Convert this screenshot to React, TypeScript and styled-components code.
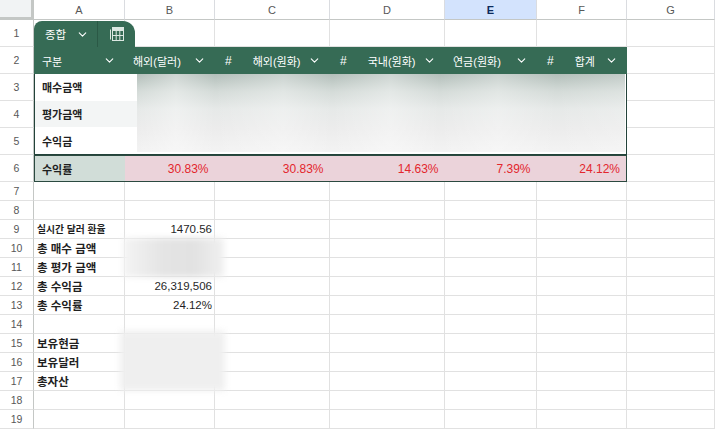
import React from 'react'
import styled, { createGlobalStyle } from 'styled-components'
import { ChevronDown } from 'lucide-react'

const GlobalStyle = createGlobalStyle`
  body {
    margin: 0;
    background: #ffffff;
    overflow: hidden;
  }
`

const COLS = ['A', 'B', 'C', 'D', 'E', 'F', 'G']
const ROW_COUNT = 19

type CellData = { text: string; bold?: boolean; right?: boolean; small?: boolean }

const lower: Record<string, CellData> = {
  '9-1': { text: '실시간 달러 환율', bold: true, small: true },
  '9-2': { text: '1470.56', right: true },
  '10-1': { text: '총 매수 금액', bold: true },
  '11-1': { text: '총 평가 금액', bold: true },
  '12-1': { text: '총 수익금', bold: true },
  '12-2': { text: '26,319,506', right: true },
  '13-1': { text: '총 수익률', bold: true },
  '13-2': { text: '24.12%', right: true },
  '15-1': { text: '보유현금', bold: true },
  '16-1': { text: '보유달러', bold: true },
  '17-1': { text: '총자산', bold: true },
}

const headers = [
  { name: '구분', num: false },
  { name: '해외(달러)', num: false },
  { name: '해외(원화)', num: true },
  { name: '국내(원화)', num: true },
  { name: '연금(원화)', num: false },
  { name: '합계', num: true },
]

const rates = ['30.83%', '30.83%', '14.63%', '7.39%', '24.12%']
const bodyLabels = ['매수금액', '평가금액', '수익금']

const TableIcon = () => (
  <svg width="16" height="16" viewBox="0 0 16 16" fill="none" stroke="#dce8e2" strokeWidth="1">
    <path d="M1.5 3.5v10" />
    <rect x="3.5" y="1.5" width="11" height="13" />
    <rect x="3.5" y="1.5" width="11" height="3" fill="#dce8e2" />
    <path d="M3.5 9.5h11M7.2 4.5v10M10.8 4.5v10" />
  </svg>
)

const App: React.FC = () => {
  const cells = []
  for (let r = 1; r <= ROW_COUNT; r++) {
    for (let c = 1; c <= COLS.length; c++) {
      const d = lower[`${r}-${c}`]
      cells.push(
        <Cell key={`${r}-${c}`} $r={r + 1} $c={c + 1} $right={d?.right} $bold={d?.bold} $small={d?.small}>
          {d?.text}
        </Cell>
      )
    }
  }

  return (
    <>
      <GlobalStyle />
      <Sheet>
        <Corner />
        {COLS.map((col, i) => (
          <ColHead key={col} $c={i + 2} $active={col === 'E'}>
            {col}
          </ColHead>
        ))}
        {Array.from({ length: ROW_COUNT }, (_, i) => (
          <RowHead key={i} $r={i + 2}>
            {i + 1}
          </RowHead>
        ))}

        {cells}

        <Tab>
          <TabLabel>
            <span>종합</span>
            <ChevronDown size={13} strokeWidth={2} />
          </TabLabel>
          <TabTool>
            <TableIcon />
          </TabTool>
        </Tab>

        <HeaderRow>
          {headers.map((h, i) => (
            <HeaderCell key={i}>
              {h.num && <TypeMark>#</TypeMark>}
              <span>{h.name}</span>
              <Chevron size={13} strokeWidth={2} />
            </HeaderCell>
          ))}
        </HeaderRow>

        <TableBody>
          {bodyLabels.map((label, i) => (
            <BodyLabel key={label} $shade={i === 1}>
              {label}
            </BodyLabel>
          ))}
          <BodyRedacted />
        </TableBody>

        <RateRow>
          <RateLabel>수익률</RateLabel>
          {rates.map((v, i) => (
            <RateValue key={i}>{v}</RateValue>
          ))}
        </RateRow>

        <Redacted $rows="11 / 13" />
        <Redacted $rows="16 / 19" $tall />
      </Sheet>
    </>
  )
}

export default App

const Sheet = styled.div`
  display: grid;
  grid-template-columns: 34px 91px 90px 115px 115px 92px 90px 1fr;
  grid-template-rows: 20px repeat(6, 27px) repeat(13, 19px);
  width: 715px;
  height: 429px;
  overflow: hidden;
  font-family: "Liberation Sans", "Noto Sans CJK KR", sans-serif;
  color: #1f1f1f;
`

const Corner = styled.div`
  grid-row: 1;
  grid-column: 1;
  background: #f1f3f4;
  border-right: 3px solid #c4c7c5;
  border-bottom: 3px solid #c4c7c5;
`

const ColHead = styled.div<{ $c: number; $active?: boolean }>`
  grid-row: 1;
  grid-column: ${({ $c }) => $c};
  display: flex;
  align-items: center;
  justify-content: center;
  font-size: 11px;
  color: ${({ $active }) => ($active ? '#0b2a5c' : '#575757')};
  font-weight: ${({ $active }) => ($active ? 700 : 400)};
  background: ${({ $active }) => ($active ? '#d3e3fd' : '#ffffff')};
  border-right: 1px solid #dadce0;
  border-bottom: 1px solid #c4c7c5;
`

const RowHead = styled.div<{ $r: number }>`
  grid-row: ${({ $r }) => $r};
  grid-column: 1;
  display: flex;
  align-items: center;
  justify-content: center;
  font-size: 10.5px;
  color: #575757;
  background: #ffffff;
  border-right: 1px solid #c4c7c5;
  border-bottom: 1px solid #e1e1e1;
`

const Cell = styled.div<{ $r: number; $c: number; $right?: boolean; $bold?: boolean; $small?: boolean }>`
  grid-row: ${({ $r }) => $r};
  grid-column: ${({ $c }) => $c};
  display: flex;
  align-items: center;
  justify-content: ${({ $right }) => ($right ? 'flex-end' : 'flex-start')};
  padding: 0 2px 0 3px;
  font-size: ${({ $small }) => ($small ? '9.8px' : '11.5px')};
  font-weight: ${({ $bold }) => ($bold ? 700 : 400)};
  white-space: nowrap;
  border-right: 1px solid #e1e1e1;
  border-bottom: 1px solid #e1e1e1;
  background: #ffffff;
`

const Tab = styled.div`
  grid-row: 2;
  grid-column: 2 / 4;
  justify-self: start;
  align-self: end;
  width: 101px;
  height: 26px;
  display: flex;
  background: #366b55;
  border-radius: 8px 12px 0 0;
  color: #ffffff;
`

const TabLabel = styled.div`
  width: 64px;
  display: flex;
  align-items: center;
  gap: 10px;
  padding-left: 11px;
  font-size: 11.5px;
  box-sizing: border-box;
  border-right: 1px solid #2b5946;
`

const TabTool = styled.div`
  flex: 1;
  display: flex;
  align-items: center;
  justify-content: center;
`

const HeaderRow = styled.div`
  grid-row: 3;
  grid-column: 2 / 8;
  display: grid;
  grid-template-columns: 91px 90px 115px 115px 92px 90px;
  background: #366b55;
  color: #ffffff;
`

const HeaderCell = styled.div`
  display: flex;
  align-items: center;
  padding: 0 9px 0 8px;
  font-size: 11px;
  white-space: nowrap;
`

const TypeMark = styled.span`
  margin: 0 21px 0 2px;
  font-size: 12px;
`

const Chevron = styled(ChevronDown)`
  margin-left: auto;
  flex-shrink: 0;
`

const TableBody = styled.div`
  grid-row: 4 / 7;
  grid-column: 2 / 8;
  display: grid;
  grid-template-columns: 102px 1fr;
  grid-template-rows: repeat(3, 1fr);
  border: 1.5px solid #23433a;
  border-top: none;
  background: #ffffff;
`

const BodyLabel = styled.div<{ $shade?: boolean }>`
  grid-column: 1;
  display: flex;
  align-items: center;
  padding-left: 7px;
  font-size: 11px;
  font-weight: 700;
  background: ${({ $shade }) => ($shade ? '#f3f5f5' : '#ffffff')};
`

const BodyRedacted = styled.div`
  grid-column: 2;
  grid-row: 1 / 4;
  margin: 0 1px 2px 0;
  background:
    linear-gradient(90deg, rgba(255,255,255,0) 0%, rgba(255,255,255,0.35) 8%, rgba(255,255,255,0) 16%,
      rgba(255,255,255,0.3) 30%, rgba(255,255,255,0) 40%, rgba(255,255,255,0.35) 52%,
      rgba(255,255,255,0) 62%, rgba(255,255,255,0.3) 74%, rgba(255,255,255,0) 86%, rgba(255,255,255,0.2) 100%),
    linear-gradient(180deg, #b3bfba 0%, #d4dbd8 22%, #e6e9e8 45%, #ececec 70%, #f3f3f3 100%);
`

const RateRow = styled.div`
  grid-row: 7;
  grid-column: 2 / 8;
  display: grid;
  grid-template-columns: 89.5px 90px 115px 115px 92px 1fr;
  border: 1.5px solid #2b4a40;
  background: #ebd3da;
`

const RateLabel = styled.div`
  display: flex;
  align-items: center;
  padding-left: 7px;
  font-size: 11px;
  font-weight: 700;
  background: #d1ddd8;
`

const RateValue = styled.div`
  display: flex;
  align-items: center;
  justify-content: flex-end;
  padding-right: 6px;
  font-size: 12px;
  color: #e3262d;
`

const Redacted = styled.div<{ $rows: string; $tall?: boolean }>`
  grid-row: ${({ $rows }) => $rows};
  grid-column: 3;
  margin: ${({ $tall }) => ($tall ? '-3px -10px 0 -5px' : '-1px -9px 0 -2px')};
  background: ${({ $tall }) =>
    $tall
      ? 'repeating-linear-gradient(180deg, #ededed 0 3px, #f3f3f3 3px 5px)'
      : 'linear-gradient(90deg, #f4f4f4, #e4e4e4 40%, #e2e2e2 70%, #f0f0f0)'};
  filter: blur(3px);
`
